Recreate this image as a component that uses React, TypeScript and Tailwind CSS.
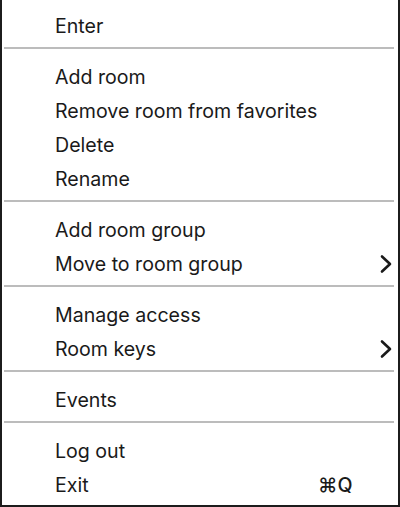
import React from "react";

type Item = { label: string; sub?: boolean; shortcut?: string };

const groups: Item[][] = [
  [{ label: "Enter" }],
  [
    { label: "Add room" },
    { label: "Remove room from favorites" },
    { label: "Delete" },
    { label: "Rename" },
  ],
  [{ label: "Add room group" }, { label: "Move to room group", sub: true }],
  [{ label: "Manage access" }, { label: "Room keys", sub: true }],
  [{ label: "Events" }],
  [{ label: "Log out" }, { label: "Exit", shortcut: "⌘Q" }],
];

function Chevron() {
  return (
    <svg width="14" height="20" viewBox="0 0 14 20" className="absolute right-[5px] top-[8px]">
      <path d="M3 2.5 L11 10 L3 17.5" fill="none" stroke="#1a1a1a" strokeWidth="2.6" strokeLinecap="round" strokeLinejoin="round" />
    </svg>
  );
}

export default function App() {
  return (
    <div
      className="w-[400px] h-[507px] bg-white border-l-2 border-r-2 border-b-2 border-[#1c1c1c] pt-[8px] text-[#1a1a1a] overflow-hidden"
      style={{ fontFamily: "Inter, 'Liberation Sans', sans-serif" }}
    >
      {groups.map((g, gi) => (
        <div key={gi}>
          {gi > 0 && (
            <div className="h-[17px] flex items-center pl-[2px] pr-[4px]">
              <div className="h-[2px] w-full bg-[#bcbcbc] -mt-[6px]" />
            </div>
          )}
          {g.map((it) => (
            <div key={it.label} className="relative h-[34px] flex items-center pt-[3px] pl-[53px] text-[19.6px] leading-none">
              <span>{it.label}</span>
              {it.sub && <Chevron />}
              {it.shortcut && (
                <span className="absolute left-[316px] font-medium">{it.shortcut}</span>
              )}
            </div>
          ))}
        </div>
      ))}
    </div>
  );
}
